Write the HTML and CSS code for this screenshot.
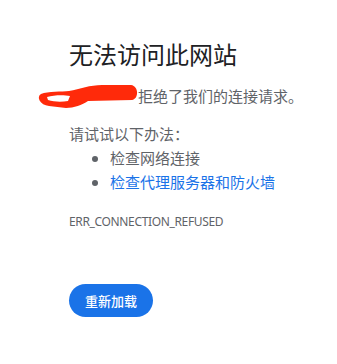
FILE: index.html
```html
<!DOCTYPE html>
<html lang="zh-CN">
<head>
    <meta charset="UTF-8" />
    <meta name="viewport" content="width=device-width, initial-scale=1.0" />
    <title>无法访问此网站</title>
    <link rel="stylesheet" href="styles.css">
</head>
<body>
    <div class="error-page">
        <h1 class="error-title">无法访问此网站</h1>

        <!-- host name hidden by a red scribble -->
        <p class="error-desc">
            <span class="host">
                <svg class="scribble" width="104" height="28" viewBox="0 0 104 28">
                    <path fill="#ff2a0a" fill-rule="evenodd"
                        d="M5,12 C12,9 26,10 33,9 C44,7 54,3 66,3 L95,3 C103,4 103,17 96,18 L52,19 C46,23 38,26 30,26 L13,24 C4,23 0,15 5,12 Z
                           M11,15 C18,13 28,13 34,14 L32,19 C26,20 18,20 12,18 Z" />
                </svg>
            </span>拒绝了我们的连接请求。
        </p>

        <p class="suggest-title">请试试以下办法：</p>
        <ul class="suggest-list">
            <li>检查网络连接</li>
            <li><a href="#" class="suggest-link">检查代理服务器和防火墙</a></li>
        </ul>

        <div class="error-code">ERR_CONNECTION_REFUSED</div>

        <button class="btn-reload">重新加载</button>
    </div>
</body>
</html>
```

FILE: styles.css
```css
:root {
    --title-color: #202124;
    --text-color: #5f6368;
    --link-color: #1a73e8;
    --button-color: #1a73e8;
}

* {
    margin: 0;
    padding: 0;
    box-sizing: border-box;
}

body {
    background: #fff;
    font-family: "Noto Sans", "Noto Sans CJK SC", sans-serif;
    color: var(--text-color);
}

.error-page {
    padding: 40px 0 0 69px;
}

.error-title {
    font-family: "Noto Sans CJK SC", sans-serif;
    font-size: 24px;
    font-weight: 400;
    line-height: 28px;
    color: var(--title-color);
}

.error-desc {
    margin-top: 16px;
    font-family: "Noto Sans CJK SC", sans-serif;
    font-size: 15px;
    line-height: 24px;
}

.host {
    display: inline-block;
    position: relative;
    width: 69px;
    height: 15px;
    vertical-align: middle;
}

.scribble {
    position: absolute;
    left: -33px;
    top: -8px;
}

.suggest-title {
    margin-top: 14px;
    font-family: "Noto Sans CJK SC", sans-serif;
    font-size: 15px;
    line-height: 24px;
}

.suggest-list {
    padding-left: 41px;
    font-family: "Noto Sans CJK SC", sans-serif;
    font-size: 15px;
    line-height: 24px;
}

.suggest-link {
    color: var(--link-color);
    text-decoration: none;
}

.error-code {
    margin-top: 20px;
    font-size: 12px;
    line-height: 16px;
    letter-spacing: -0.35px;
    color: var(--text-color);
}

.btn-reload {
    margin-top: 54px;
    height: 33px;
    padding: 0 16px;
    border: none;
    border-radius: 17px;
    background: var(--button-color);
    color: #fff;
    font-family: "Noto Sans CJK SC", sans-serif;
    font-size: 13px;
    font-weight: 500;
    cursor: pointer;
}
```
